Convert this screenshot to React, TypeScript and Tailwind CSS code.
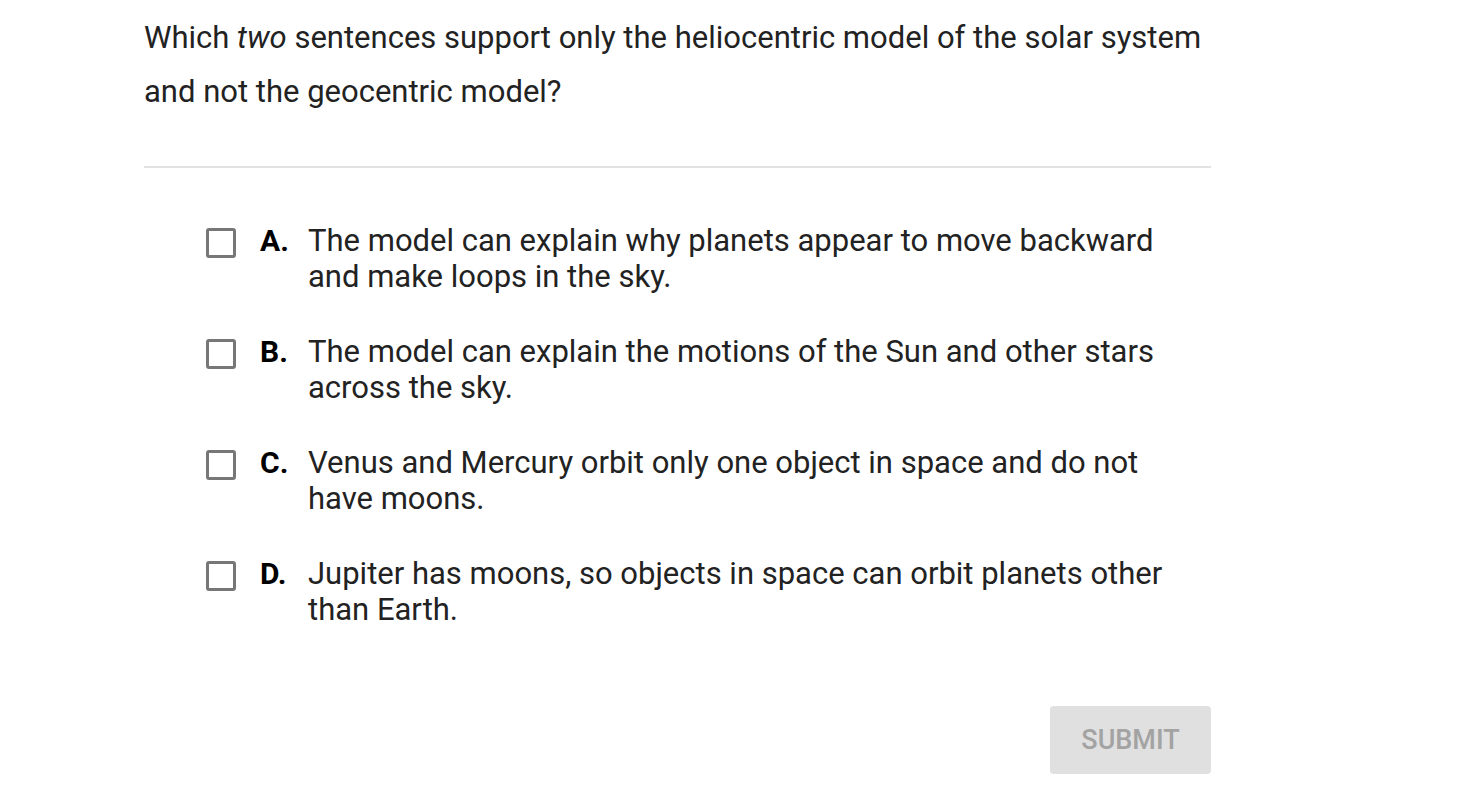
const options = [
  { key: "A", lines: ["The model can explain why planets appear to move backward", "and make loops in the sky."] },
  { key: "B", lines: ["The model can explain the motions of the Sun and other stars", "across the sky."] },
  { key: "C", lines: ["Venus and Mercury orbit only one object in space and do not", "have moons."] },
  { key: "D", lines: ["Jupiter has moons, so objects in space can orbit planets other", "than Earth."] },
];

export default function App() {
  return (
    <div className="min-h-screen w-full bg-white font-['Roboto',sans-serif] text-[#222]">
      <div className="ml-[144px] w-[1067px] pt-[11px]">
        {/* Question */}
        <p className="text-[31px] leading-[54px]">
          Which <em>two</em> sentences support only the heliocentric model of the solar system
          <br />
          and not the geocentric model?
        </p>

        <div className="mt-[47px] h-[2px] bg-[#e2e2e2]" />

        {/* Choices */}
        <div className="ml-[62px] mt-[55px] flex flex-col gap-[39px]">
          {options.map((o) => (
            <label key={o.key} className="flex items-start cursor-pointer">
              <span className="mt-[5px] h-[30px] w-[30px] shrink-0 rounded-[3px] border-[3px] border-[#777]" />
              <span className="ml-[24px] w-[48px] shrink-0 text-[30px] font-bold leading-[36px] text-black">
                {o.key}.
              </span>
              <span className="whitespace-nowrap text-[31px] leading-[36px]">
                {o.lines[0]}
                <br />
                {o.lines[1]}
              </span>
            </label>
          ))}
        </div>

        <div className="mt-[78px] flex justify-end">
          <button className="h-[68px] w-[161px] rounded-[4px] bg-[#e0e0e0] text-[27px] font-medium text-[#a3a3a3]">
            SUBMIT
          </button>
        </div>
      </div>
    </div>
  );
}
